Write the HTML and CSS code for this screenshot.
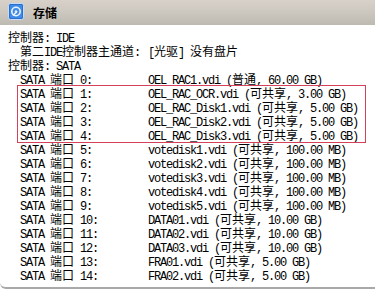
FILE: index.html
```html
<!DOCTYPE html>
<html lang="zh-CN">
<head>
    <meta charset="UTF-8">
    <title>存储</title>
    <link rel="stylesheet" href="styles.css">
</head>
<body>
    <div class="panel">
        <div class="head">
            <svg class="icon" width="16" height="17" viewBox="0 0 16 17">
                <rect x="0.5" y="0.5" width="15" height="16" rx="2" fill="#2a6fd0" stroke="#c8dcf4"/>
                <rect x="2" y="2" width="12" height="13" rx="1" fill="#3f8be6"/>
                <circle cx="8" cy="8.5" r="4.2" fill="none" stroke="#e8f2ff" stroke-width="1.6"/>
                <path d="M5 12.5 L9 8.5" stroke="#e8f2ff" stroke-width="1.6"/>
                <circle cx="8" cy="8.5" r="1.2" fill="#e8f2ff"/>
            </svg>
            <span class="title">存储</span>
        </div>
        <div class="body">
            <div class="line"><i>控制器</i>: IDE</div>
            <div class="row"><span><i>第二</i>IDE<i>控制器主通道</i>:</span><span>[<i>光驱</i>] <i>没有盘片</i></span></div>
            <div class="line"><i>控制器</i>: SATA</div>
            <div class="row"><span>SATA <i>端口</i> 0:</span><span>OEL_RAC1.vdi (<i>普通</i>, 60.00 GB)</span></div>
            <div class="mark">
                <div class="row"><span>SATA <i>端口</i> 1:</span><span>OEL_RAC_OCR.vdi (<i>可共享</i>, 3.00 GB)</span></div>
                <div class="row"><span>SATA <i>端口</i> 2:</span><span>OEL_RAC_Disk1.vdi (<i>可共享</i>, 5.00 GB)</span></div>
                <div class="row"><span>SATA <i>端口</i> 3:</span><span>OEL_RAC_Disk2.vdi (<i>可共享</i>, 5.00 GB)</span></div>
                <div class="row"><span>SATA <i>端口</i> 4:</span><span>OEL_RAC_Disk3.vdi (<i>可共享</i>, 5.00 GB)</span></div>
            </div>
            <div class="row"><span>SATA <i>端口</i> 5:</span><span>votedisk1.vdi (<i>可共享</i>, 100.00 MB)</span></div>
            <div class="row"><span>SATA <i>端口</i> 6:</span><span>votedisk2.vdi (<i>可共享</i>, 100.00 MB)</span></div>
            <div class="row"><span>SATA <i>端口</i> 7:</span><span>votedisk3.vdi (<i>可共享</i>, 100.00 MB)</span></div>
            <div class="row"><span>SATA <i>端口</i> 8:</span><span>votedisk4.vdi (<i>可共享</i>, 100.00 MB)</span></div>
            <div class="row"><span>SATA <i>端口</i> 9:</span><span>votedisk5.vdi (<i>可共享</i>, 100.00 MB)</span></div>
            <div class="row"><span>SATA <i>端口</i> 10:</span><span>DATA01.vdi (<i>可共享</i>, 10.00 GB)</span></div>
            <div class="row"><span>SATA <i>端口</i> 11:</span><span>DATA02.vdi (<i>可共享</i>, 10.00 GB)</span></div>
            <div class="row"><span>SATA <i>端口</i> 12:</span><span>DATA03.vdi (<i>可共享</i>, 10.00 GB)</span></div>
            <div class="row"><span>SATA <i>端口</i> 13:</span><span>FRA01.vdi (<i>可共享</i>, 5.00 GB)</span></div>
            <div class="row"><span>SATA <i>端口</i> 14:</span><span>FRA02.vdi (<i>可共享</i>, 5.00 GB)</span></div>
        </div>
    </div>
</body>
</html>
```

FILE: styles.css
```css
*{
    margin: 0;
    padding: 0;
}
body{
    background: #fff;
    font-family: "Liberation Mono", "Noto Sans CJK SC", monospace;
    font-size: 12px;
    color: #000;
}
i{
    font-style: normal;
    font-family: "Noto Sans CJK SC", sans-serif;
    letter-spacing: 0;
}
.panel{
    height: 287px;
    border-bottom: 2px solid #a9a9a9;
    border-bottom-left-radius: 6px;
    overflow: hidden;
}
.head{
    height: 25px;
    display: flex;
    align-items: center;
    padding-left: 8px;
    background: linear-gradient(#d8d1ca, #c9c5bd 60%, #bdbab1);
}
.icon{
    margin-top: -3px;
}
.title{
    margin-left: 9px;
    font-family: "Noto Sans CJK SC", sans-serif;
    font-weight: bold;
    font-size: 12px;
}
.body{
    padding: 5px 0 0 8px;
}
.line,
.row{
    height: 14px;
    line-height: 14px;
    letter-spacing: -1.2px;
    white-space: nowrap;
}
.row{
    display: grid;
    grid-template-columns: 128px auto;
    padding-left: 12px;
}
.mark{
    margin: 0 10px 0 10px;
    outline: 1px solid #d4415c;
}
.mark .row{
    padding-left: 2px;
}
```
